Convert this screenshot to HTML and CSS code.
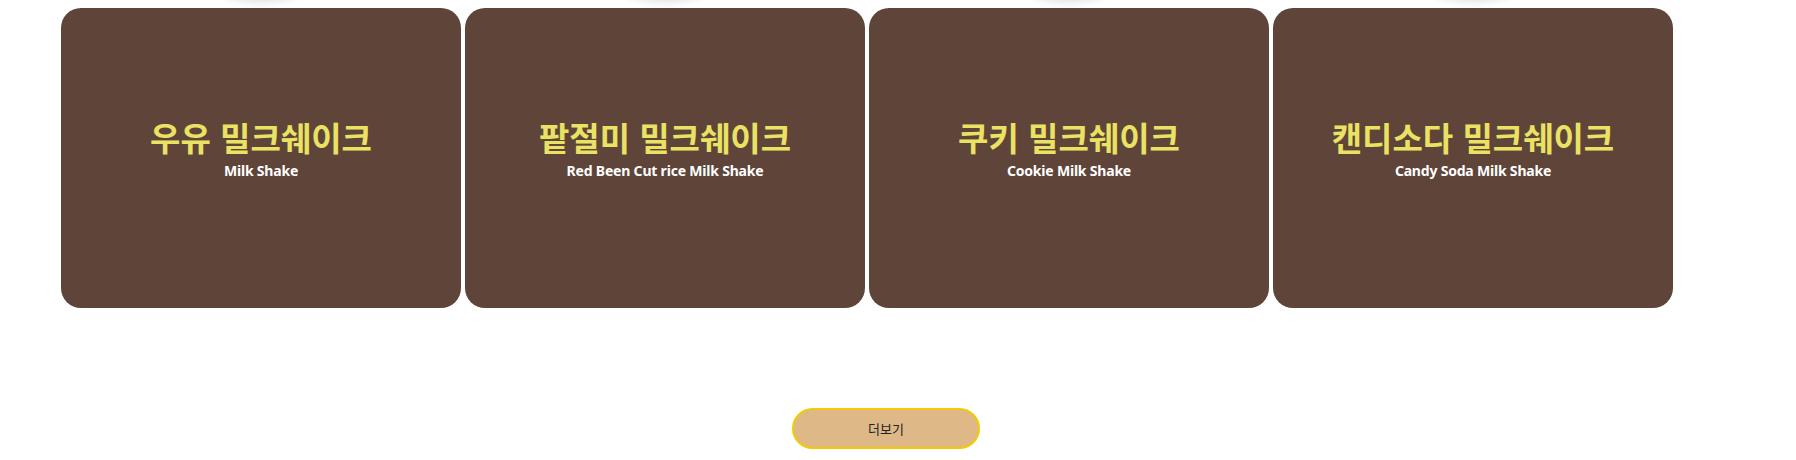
FILE: index.html
```html
<!DOCTYPE html>
<html lang="ko">
<head>
<meta charset="utf-8">
<title>Milk Shake</title>
<link rel="stylesheet" href="styles.css">
</head>
<body>
<div class="page">
  <div class="prev-row">
    <div class="prev-item"><div class="prev-circle"></div></div>
    <div class="prev-item"><div class="prev-circle"></div></div>
    <div class="prev-item"><div class="prev-circle"></div></div>
    <div class="prev-item"><div class="prev-circle"></div></div>
  </div>
  <div class="cards">
    <div class="card">
      <h2 class="card-title">우유 밀크쉐이크</h2>
      <p class="card-sub">Milk Shake</p>
    </div>
    <div class="card">
      <h2 class="card-title">팥절미 밀크쉐이크</h2>
      <p class="card-sub">Red Been Cut rice Milk Shake</p>
    </div>
    <div class="card">
      <h2 class="card-title">쿠키 밀크쉐이크</h2>
      <p class="card-sub">Cookie Milk Shake</p>
    </div>
    <div class="card">
      <h2 class="card-title">캔디소다 밀크쉐이크</h2>
      <p class="card-sub">Candy Soda Milk Shake</p>
    </div>
  </div>
  <div class="more-wrap">
    <button class="more-btn">더보기</button>
  </div>
</div>
</body>
</html>
```
FILE: styles.css
```css
html, body {
  margin: 0;
  padding: 0;
  background: #ffffff;
  overflow: hidden;
}
body {
  font-family: "Noto Sans", "Noto Sans CJK KR", sans-serif;
}
.page {
  padding-left: 61px;
}
.prev-row {
  display: flex;
  gap: 4px;
  height: 0;
}
.prev-item {
  width: 400px;
  height: 0;
  display: flex;
  justify-content: center;
  align-items: flex-end;
}
.prev-circle {
  flex: none;
  width: 200px;
  height: 200px;
  border-radius: 50%;
  background: #ffffff;
  box-shadow: 0 2px 8px rgba(0, 0, 0, 0.12);
}
.cards {
  display: flex;
  gap: 4px;
  margin-top: 8px;
}
.card {
  width: 400px;
  height: 300px;
  box-sizing: border-box;
  padding-bottom: 22px;
  background: #5f4539;
  border-radius: 20px;
  display: flex;
  flex-direction: column;
  align-items: center;
  justify-content: center;
}
.card-title {
  margin: 0;
  font-family: "Noto Sans CJK KR", sans-serif;
  font-size: 33px;
  font-weight: 700;
  letter-spacing: 0;
  line-height: 48px;
  color: #e9e262;
}
.card-sub {
  margin: 0;
  font-family: "Noto Sans", "Noto Sans CJK KR", sans-serif;
  font-size: 14px;
  font-weight: 700;
  line-height: 20px;
  letter-spacing: -0.2px;
  color: #ffffff;
}
.more-wrap {
  display: flex;
  padding-left: 731px;
  margin-top: 100px;
}
.more-btn {
  width: 188px;
  height: 41px;
  box-sizing: border-box;
  border: 2px solid #f0cc00;
  border-radius: 21px;
  background: #deb887;
  font-family: "Noto Sans CJK KR", sans-serif;
  font-size: 13px;
  color: #222222;
  padding: 0;
}
```
